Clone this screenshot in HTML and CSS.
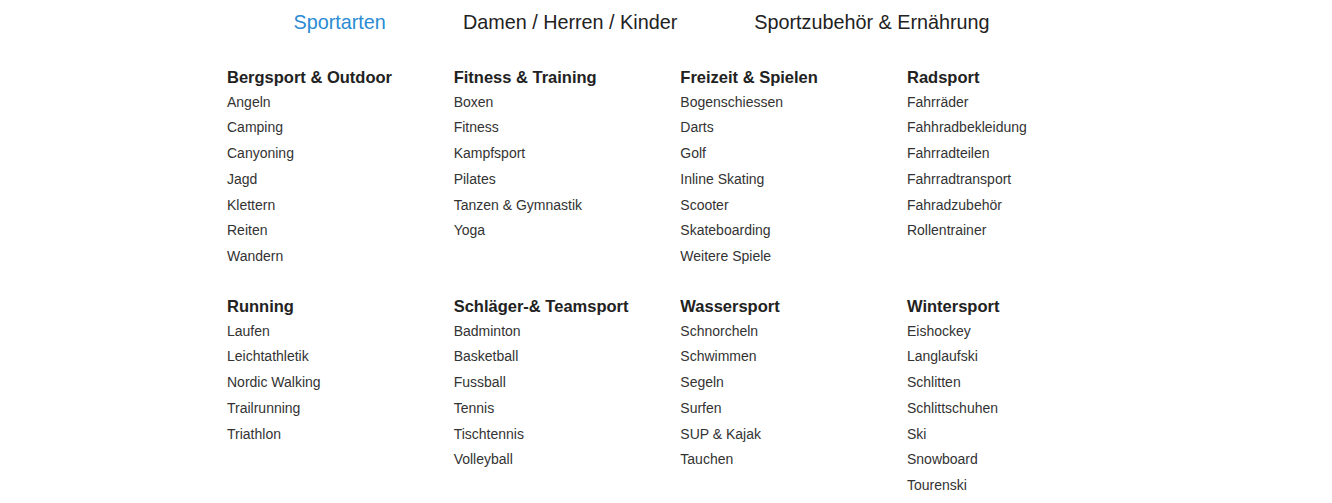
FILE: index.html
```html
<!DOCTYPE html>
<html lang="de">
<head>
<meta charset="utf-8">
<title>Sportarten</title>
<link rel="stylesheet" href="styles.css">
</head>
<body>
<nav class="topnav">
  <a class="topnav-item active" href="#">Sportarten</a>
  <a class="topnav-item" href="#">Damen / Herren / Kinder</a>
  <a class="topnav-item" href="#">Sportzubehör &amp; Ernährung</a>
</nav>
<div class="mega">
  <div class="group">
    <h3 class="group-title">Bergsport &amp; Outdoor</h3>
    <ul class="group-list">
      <li>Angeln</li><li>Camping</li><li>Canyoning</li><li>Jagd</li><li>Klettern</li><li>Reiten</li><li>Wandern</li>
    </ul>
  </div>
  <div class="group">
    <h3 class="group-title">Fitness &amp; Training</h3>
    <ul class="group-list">
      <li>Boxen</li><li>Fitness</li><li>Kampfsport</li><li>Pilates</li><li>Tanzen &amp; Gymnastik</li><li>Yoga</li>
    </ul>
  </div>
  <div class="group">
    <h3 class="group-title">Freizeit &amp; Spielen</h3>
    <ul class="group-list">
      <li>Bogenschiessen</li><li>Darts</li><li>Golf</li><li>Inline Skating</li><li>Scooter</li><li>Skateboarding</li><li>Weitere Spiele</li>
    </ul>
  </div>
  <div class="group">
    <h3 class="group-title">Radsport</h3>
    <ul class="group-list">
      <li>Fahrräder</li><li>Fahhradbekleidung</li><li>Fahrradteilen</li><li>Fahrradtransport</li><li>Fahradzubehör</li><li>Rollentrainer</li>
    </ul>
  </div>
  <div class="group">
    <h3 class="group-title">Running</h3>
    <ul class="group-list">
      <li>Laufen</li><li>Leichtathletik</li><li>Nordic Walking</li><li>Trailrunning</li><li>Triathlon</li>
    </ul>
  </div>
  <div class="group">
    <h3 class="group-title">Schläger-&amp; Teamsport</h3>
    <ul class="group-list">
      <li>Badminton</li><li>Basketball</li><li>Fussball</li><li>Tennis</li><li>Tischtennis</li><li>Volleyball</li>
    </ul>
  </div>
  <div class="group">
    <h3 class="group-title">Wassersport</h3>
    <ul class="group-list">
      <li>Schnorcheln</li><li>Schwimmen</li><li>Segeln</li><li>Surfen</li><li>SUP &amp; Kajak</li><li>Tauchen</li>
    </ul>
  </div>
  <div class="group">
    <h3 class="group-title">Wintersport</h3>
    <ul class="group-list">
      <li>Eishockey</li><li>Langlaufski</li><li>Schlitten</li><li>Schlittschuhen</li><li>Ski</li><li>Snowboard</li><li>Tourenski</li>
    </ul>
  </div>
</div>
</body>
</html>
```
FILE: styles.css
```css
html, body {
  margin: 0;
  padding: 0;
  background: #fff;
  font-family: "Liberation Sans", Arial, sans-serif;
  color: #333;
}

.topnav {
  display: flex;
  gap: 77px;
  padding-left: 293.5px;
  height: 44px;
  align-items: center;
}

.topnav-item {
  font-size: 19.8px;
  color: #222;
  text-decoration: none;
  line-height: 44px;
}

.topnav-item.active {
  color: #2a8bd3;
}

.mega {
  display: grid;
  grid-template-columns: repeat(4, 226.67px);
  row-gap: 24.45px;
  margin-left: 227px;
  padding-top: 21px;
}

.group-title {
  margin: 0;
  font-size: 16.5px;
  font-weight: bold;
  color: #222;
  line-height: 24.7px;
}

.group-list {
  list-style: none;
  margin: 0;
  padding: 0;
}

.group-list li {
  font-size: 14px;
  line-height: 25.7px;
  color: #333;
}
```
